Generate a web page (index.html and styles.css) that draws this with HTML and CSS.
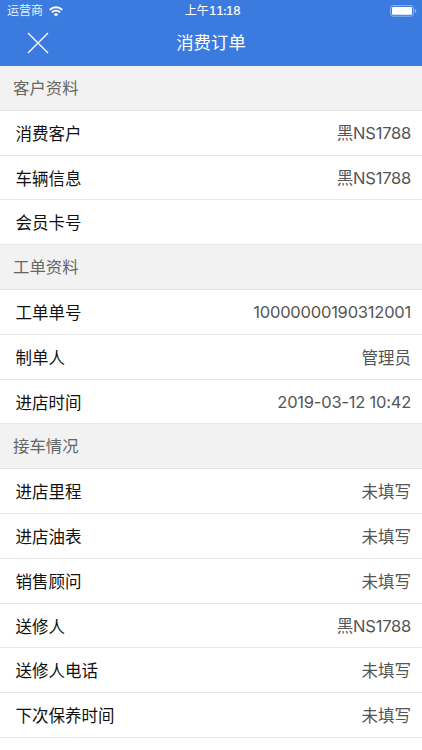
FILE: index.html
```
<!DOCTYPE html>
<html lang="zh-CN">

<head>
    <meta charset="UTF-8">
    <meta name="viewport" content="width=device-width, initial-scale=1.0">
    <title>消费订单</title>
    <link rel="stylesheet" href="styles.css">
</head>

<body>
    <header class="header">
        <div class="status-bar">
            <div class="carrier">
                <span>运营商</span>
                <svg class="wifi" width="14" height="11" viewBox="0 0 14 11">
                    <path d="M.7 3.9C4.3 .4 9.7 .4 13.3 3.9" fill="none" stroke="#fff" stroke-width="2"/>
                    <path d="M2.9 6.4C5.2 4.1 8.8 4.1 11.1 6.4" fill="none" stroke="#fff" stroke-width="1.8"/>
                    <path d="M4.7 8.2C6 7 8 7 9.3 8.2L7 10.5Z" fill="#fff"/>
                </svg>
            </div>
            <div class="time">上午<span class="clock">11:18</span></div>
            <div class="battery">
                <svg width="27" height="12" viewBox="0 0 27 12">
                    <rect x=".6" y=".6" width="22.8" height="10.6" rx="2.6" fill="none" stroke="#fff" stroke-opacity=".45"/>
                    <rect x="2" y="2" width="20" height="7.8" rx="1.2" fill="#fff"/>
                    <path d="M24.8 4C26.8 4.5 26.8 7.4 24.8 7.9Z" fill="#fff" fill-opacity=".5"/>
                </svg>
            </div>
        </div>
        <div class="nav-bar">
            <svg class="close" width="22" height="22" viewBox="0 0 22 22">
                <path d="M1 1L21 21M21 1L1 21" fill="none" stroke="#fff" stroke-width="1.3"/>
            </svg>
            <h1>消费订单</h1>
        </div>
    </header>

    <div class="list">
        <h2>客户资料</h2>
        <div class="row"><span>消费客户</span><span class="value number">黑NS1788</span></div>
        <div class="row"><span>车辆信息</span><span class="value number">黑NS1788</span></div>
        <div class="row"><span>会员卡号</span><span class="value"></span></div>

        <h2>工单资料</h2>
        <div class="row"><span>工单单号</span><span class="value number">10000000190312001</span></div>
        <div class="row"><span>制单人</span><span class="value">管理员</span></div>
        <div class="row"><span>进店时间</span><span class="value number">2019-03-12 10:42</span></div>

        <h2>接车情况</h2>
        <div class="row"><span>进店里程</span><span class="value">未填写</span></div>
        <div class="row"><span>进店油表</span><span class="value">未填写</span></div>
        <div class="row"><span>销售顾问</span><span class="value">未填写</span></div>
        <div class="row"><span>送修人</span><span class="value number">黑NS1788</span></div>
        <div class="row"><span>送修人电话</span><span class="value">未填写</span></div>
        <div class="row"><span>下次保养时间</span><span class="value">未填写</span></div>
    </div>
</body>

</html>
```
FILE: styles.css
```
body {
    background-color: white;
    color: #111;
    margin: 0;
    padding: 0;
    height: 750px;
    overflow: hidden;
    font-family: Inter, "Noto Sans CJK SC", sans-serif;
}

.header {
    box-sizing: border-box;
    height: 66px;
    background-color: #3b7bdf;
    color: white;
}

.status-bar {
    display: grid;
    grid-template-columns: 1fr auto 1fr;
    align-items: center;
    height: 22px;
    padding: 0 5px 0 7px;
    font-size: 12px;
    line-height: 22px;
}

.carrier {
    display: flex;
    align-items: center;
    gap: 6px;
    color: #e8f0fc;
}

.time {
    padding-left: 1px;
}

.clock {
    font-weight: 500;
    font-variant-numeric: tabular-nums;
    letter-spacing: -0.6px;
}

.battery {
    display: flex;
    justify-content: flex-end;
}

.nav-bar {
    display: grid;
    grid-template-columns: 1fr auto 1fr;
    align-items: center;
    height: 42px;
    padding: 0 27px;
}

.nav-bar h1 {
    margin: 0;
    font-size: 17.4px;
    font-weight: 400;
    line-height: 42px;
}

.list h2 {
    box-sizing: border-box;
    height: 44.8px;
    margin: 0;
    padding: 0 13px;
    border-bottom: 1px solid #e2e2e4;
    background-color: #f2f2f2;
    color: #666;
    font-size: 16.4px;
    font-weight: 400;
    line-height: 45.8px;
}

.row {
    box-sizing: border-box;
    display: flex;
    justify-content: space-between;
    height: 44.8px;
    padding: 0 11px 0 15.5px;
    border-bottom: 1px solid #e6e6e6;
    font-size: 16.5px;
    line-height: 46px;
}

.value {
    color: #555;
}

.number {
    letter-spacing: -0.22px;
    line-height: 45px;
}
```
